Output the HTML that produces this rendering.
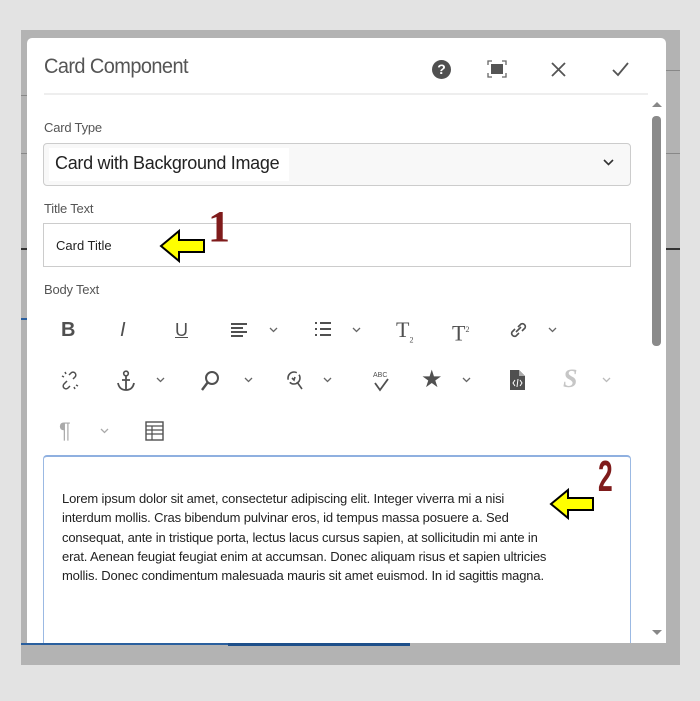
<!DOCTYPE html>
<html><head><meta charset="utf-8"><style>
*{margin:0;padding:0;box-sizing:border-box}
body{width:700px;height:701px;background:#e3e3e3;position:relative;overflow:hidden;font-family:"Liberation Sans",sans-serif;color:#4b4b4b}
.a{position:absolute}
.lbl{font-size:13px;color:#555;letter-spacing:-.2px}
.ic{position:absolute;color:#505050;font-size:20px;line-height:22px;text-align:center}
</style></head><body>
<div class="a" style="left:21px;top:30px;width:659px;height:635px;background:#b3b3b3"></div>
<div class="a" style="left:21px;top:95px;width:6px;height:1px;background:#888"></div>
<div class="a" style="left:21px;top:153px;width:6px;height:1px;background:#888"></div>
<div class="a" style="left:21px;top:248px;width:6px;height:2px;background:#333"></div>
<div class="a" style="left:666px;top:248px;width:14px;height:2px;background:#333"></div>
<div class="a" style="left:666px;top:70px;width:14px;height:1px;background:#888"></div>
<div class="a" style="left:666px;top:153px;width:14px;height:1px;background:#888"></div>
<div class="a" style="left:21px;top:318px;width:6px;height:2px;background:#2a5f9e"></div>
<div class="a" style="left:27px;top:38px;width:639px;height:605px;background:#fff;border-radius:5px 5px 0 0;overflow:hidden">
 <div class="a" style="left:16px;top:417px;width:588px;height:200px;border:1px solid #9bb9e3;border-top:2px solid #8fb0e0;border-radius:4px 4px 0 0;background:#fff"></div>
</div>
<div class="a" style="left:44px;top:55px;font-size:21px;color:#555;letter-spacing:-.6px;transform:scaleX(.95);transform-origin:left">Card Component</div>
<div class="a" style="left:432px;top:60px;width:19px;height:19px;border-radius:50%;background:#505050;color:#fff;font-size:14px;font-weight:bold;text-align:center;line-height:19px">?</div>
<svg class="a" style="left:487px;top:60px" width="20" height="18" viewBox="0 0 20 18"><path d="M1 5V1h4M15 1h4v4M19 13v4h-4M5 17H1v-4" fill="none" stroke="#666" stroke-width="1.3"/><rect x="4" y="4" width="12" height="10" fill="#555"/></svg>
<svg class="a" style="left:551px;top:62px" width="15" height="15"><path d="M1 1L14 14M14 1L1 14" stroke="#555" stroke-width="1.8"/></svg>
<svg class="a" style="left:612px;top:62px" width="17" height="15"><path d="M1 8L6 13L16 1" fill="none" stroke="#555" stroke-width="1.8"/></svg>
<div class="a" style="left:44px;top:93px;width:604px;height:2px;background:#eee"></div>
<svg class="a" style="left:651px;top:100px" width="12" height="8"><path d="M1 7L6 2L11 7Z" fill="#888"/></svg>
<div class="a" style="left:652px;top:116px;width:9px;height:230px;border-radius:4px;background:#8a8a8a"></div>
<svg class="a" style="left:651px;top:629px" width="12" height="8"><path d="M1 1L6 6L11 1Z" fill="#888"/></svg>
<div class="a lbl" style="left:44px;top:120px">Card Type</div>
<div class="a" style="left:43px;top:143px;width:588px;height:43px;border:1px solid #ccc;border-radius:4px;background:#f8f8f8"></div>
<div class="a" style="left:49px;top:148px;width:240px;height:33px;background:#fff"></div>
<div class="a" style="left:55px;top:153px;font-size:18px;color:#222;letter-spacing:-.3px">Card with Background Image</div>
<svg class="a" style="left:603px;top:159px" width="11" height="8"><path d="M1 1L5.5 5.5L10 1" fill="none" stroke="#333" stroke-width="1.6"/></svg>
<div class="a lbl" style="left:44px;top:201px">Title Text</div>
<div class="a" style="left:43px;top:223px;width:588px;height:44px;border:1px solid #ccc;background:#fff"></div>
<div class="a" style="left:56px;top:238px;font-size:13px;color:#222">Card Title</div>
<svg class="a" style="left:158px;top:228px" width="50" height="36"><path d="M3 18L21 3V12H46V24H21V33Z" fill="#ffff00" stroke="#000" stroke-width="2"/></svg>
<div class="a" style="left:208px;top:203px;font-family:'Liberation Serif',serif;font-weight:bold;font-size:44px;color:#7f1b1b;line-height:48px">1</div>
<div class="a lbl" style="left:44px;top:282px">Body Text</div>
<!-- row1 -->
<div class="ic" style="left:61px;top:319px;font-weight:bold">B</div>
<div class="ic" style="left:120px;top:319px;font-style:italic">I</div>
<div class="ic" style="left:175px;top:319px;text-decoration:underline;font-size:18px">U</div>
<svg class="a" style="left:230px;top:322px" width="18" height="16"><path d="M1 2h16M1 6h12M1 10h16M1 14h12" stroke="#505050" stroke-width="2"/></svg>
<svg class="a" style="left:269px;top:327px" width="9" height="6"><path d="M1 1L4.5 4.5L8 1" fill="none" stroke="#666" stroke-width="1.3"/></svg>
<svg class="a" style="left:314px;top:321px" width="18" height="16"><path d="M1 2h2M6 2h11M1 8h2M6 8h11M1 14h2M6 14h11" stroke="#505050" stroke-width="2"/></svg>
<svg class="a" style="left:352px;top:327px" width="9" height="6"><path d="M1 1L4.5 4.5L8 1" fill="none" stroke="#666" stroke-width="1.3"/></svg>
<div class="ic" style="left:396px;top:319px;font-family:'Liberation Serif',serif;font-size:22px">T<sub style="font-size:8px">2</sub></div>
<div class="ic" style="left:452px;top:319px;font-family:'Liberation Serif',serif;font-size:22px">T<sup style="font-size:8px">2</sup></div>
<svg class="a" style="left:508px;top:320px" width="22" height="20"><path d="M8 12L13 7M7 9L4 12a3 3 0 0 0 4 4l3-3M14 11l3-3a3 3 0 0 0-4-4L10 7" fill="none" stroke="#505050" stroke-width="1.6"/></svg>
<svg class="a" style="left:548px;top:327px" width="9" height="6"><path d="M1 1L4.5 4.5L8 1" fill="none" stroke="#666" stroke-width="1.3"/></svg>
<!-- row2 -->
<svg class="a" style="left:60px;top:371px" width="20" height="20"><path d="M7 10L4 13a2.5 2.5 0 0 0 4 4l2-2M13 8l2-2a2.5 2.5 0 0 0-4-4L9 4M2 5l2 1M5 1l1 2M15 18l-1-2M18 15l-2-1" fill="none" stroke="#505050" stroke-width="1.5"/></svg>
<svg class="a" style="left:116px;top:370px" width="20" height="22"><circle cx="10" cy="3.5" r="2.3" fill="none" stroke="#505050" stroke-width="1.6"/><path d="M10 6v14M6 10h8M2 13c1 5 4 7 8 7s7-2 8-7" fill="none" stroke="#505050" stroke-width="1.8"/></svg>
<svg class="a" style="left:156px;top:377px" width="9" height="6"><path d="M1 1L4.5 4.5L8 1" fill="none" stroke="#666" stroke-width="1.3"/></svg>
<svg class="a" style="left:200px;top:370px" width="20" height="22"><circle cx="12" cy="8" r="6" fill="none" stroke="#505050" stroke-width="2"/><path d="M8 12L2 20" stroke="#505050" stroke-width="2.4"/></svg>
<svg class="a" style="left:244px;top:377px" width="9" height="6"><path d="M1 1L4.5 4.5L8 1" fill="none" stroke="#666" stroke-width="1.3"/></svg>
<svg class="a" style="left:283px;top:369px" width="22" height="22"><circle cx="11" cy="9" r="6" fill="none" stroke="#505050" stroke-width="1.6" stroke-dasharray="14 3"/><path d="M14 13l5 7M9 9l2 2 1-3" stroke="#505050" stroke-width="1.6" fill="none"/></svg>
<svg class="a" style="left:323px;top:377px" width="9" height="6"><path d="M1 1L4.5 4.5L8 1" fill="none" stroke="#666" stroke-width="1.3"/></svg>
<div class="a" style="left:373px;top:372px;font-size:7px;color:#505050">ABC</div>
<svg class="a" style="left:374px;top:378px" width="16" height="14"><path d="M1 5L6 12L14 1" fill="none" stroke="#505050" stroke-width="1.8"/></svg>
<div class="ic" style="left:421px;top:369px;font-size:24px">★</div>
<svg class="a" style="left:462px;top:377px" width="9" height="6"><path d="M1 1L4.5 4.5L8 1" fill="none" stroke="#666" stroke-width="1.3"/></svg>
<svg class="a" style="left:510px;top:370px" width="15" height="20"><path d="M0 0h9l6 6v14H0Z" fill="#505050"/><path d="M9 0v6h6" fill="#aaa"/><path d="M5 10l-2 3 2 3M10 10l2 3-2 3M8 9l-1 8" stroke="#fff" stroke-width="1" fill="none"/></svg>
<div class="ic" style="left:563px;top:368px;font-family:'Liberation Serif',serif;font-weight:bold;font-style:italic;font-size:26px;color:#c6c6c6">S</div>
<svg class="a" style="left:602px;top:377px" width="9" height="6"><path d="M1 1L4.5 4.5L8 1" fill="none" stroke="#bbb" stroke-width="1.3"/></svg>
<!-- row3 -->
<div class="ic" style="left:59px;top:420px;font-size:22px;color:#aaa">¶</div>
<svg class="a" style="left:100px;top:428px" width="9" height="6"><path d="M1 1L4.5 4.5L8 1" fill="none" stroke="#aaa" stroke-width="1.3"/></svg>
<svg class="a" style="left:145px;top:421px" width="19" height="20"><rect x="1" y="1" width="17" height="18" fill="none" stroke="#505050" stroke-width="1.4"/><path d="M1 5h17M1 9h17M1 13h17M7 5v14" stroke="#505050" stroke-width="1.2"/></svg>
<div class="a" style="left:62px;top:489px;width:530px;font-size:13px;line-height:19.3px;color:#222;letter-spacing:-.15px">Lorem ipsum dolor sit amet, consectetur adipiscing elit. Integer viverra mi a nisi<br>interdum mollis. Cras bibendum pulvinar eros, id tempus massa posuere a. Sed<br>consequat, ante in tristique porta, lectus lacus cursus sapien, at sollicitudin mi ante in<br>erat. Aenean feugiat feugiat enim at accumsan. Donec aliquam risus et sapien ultricies<br>mollis. Donec condimentum malesuada mauris sit amet euismod. In id sagittis magna.</div>
<svg class="a" style="left:548px;top:487px" width="50" height="34"><path d="M3 17L20 3V11H45V23H20V31Z" fill="#ffff00" stroke="#000" stroke-width="2"/></svg>
<div class="a" style="left:598px;top:455px;font-weight:bold;font-size:44px;color:#7f1b1b;line-height:44px;transform:scaleX(.6);transform-origin:left">2</div>
<div class="a" style="left:21px;top:643px;width:207px;height:2px;background:#2a5f9e"></div>
<div class="a" style="left:228px;top:643px;width:182px;height:3px;background:#1d4f8a"></div>
</body></html>
